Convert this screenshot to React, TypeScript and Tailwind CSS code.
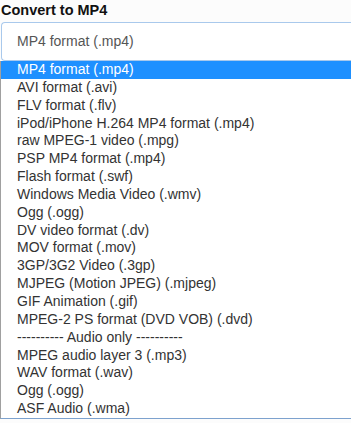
const formats = [
  'MP4 format (.mp4)',
  'AVI format (.avi)',
  'FLV format (.flv)',
  'iPod/iPhone H.264 MP4 format (.mp4)',
  'raw MPEG-1 video (.mpg)',
  'PSP MP4 format (.mp4)',
  'Flash format (.swf)',
  'Windows Media Video (.wmv)',
  'Ogg (.ogg)',
  'DV video format (.dv)',
  'MOV format (.mov)',
  '3GP/3G2 Video (.3gp)',
  'MJPEG (Motion JPEG) (.mjpeg)',
  'GIF Animation (.gif)',
  'MPEG-2 PS format (DVD VOB) (.dvd)',
  '---------- Audio only ----------',
  'MPEG audio layer 3 (.mp3)',
  'WAV format (.wav)',
  'Ogg (.ogg)',
  'ASF Audio (.wma)',
];

export default function App() {
  return (
    <div className="w-[351px] h-[423px] overflow-hidden bg-[#fcfcfc] font-['Liberation_Sans',Arial,sans-serif]">
      <h1 className="pl-[1px] pt-[2px] h-[22px] text-[14.5px] leading-[17px] font-bold text-[#111]">
        Convert to MP4
      </h1>
      <div className="ml-[1px] w-[360px] h-[39px] flex items-center pl-[15px] bg-white border border-[#a9c9ec] border-r-0 rounded-l-[4px] text-[14px] text-[#555]">
        MP4 format (.mp4)
      </div>
      <ul className="w-[360px] bg-white border-l border-[#a0a0a0] border-b border-b-[#7da2ce] text-[14px] text-[#333]">
        {formats.map((f, i) => (
          <li
            key={i}
            className={
              i === 0
                ? 'h-[17.85px] leading-[17.85px] pl-[16px] bg-[#1e90ff] text-white'
                : 'h-[17.85px] leading-[17.85px] pl-[16px]'
            }
          >
            {f}
          </li>
        ))}
      </ul>
    </div>
  );
}
